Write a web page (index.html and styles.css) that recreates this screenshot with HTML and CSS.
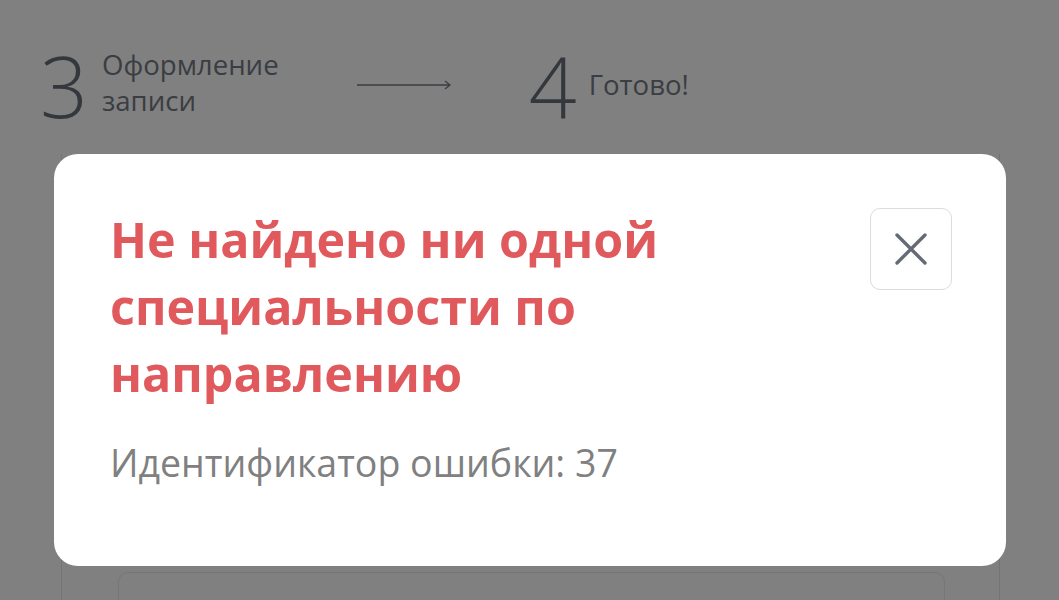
FILE: index.html
```html
<!DOCTYPE html>
<html lang="ru">
<head>
<meta charset="utf-8">
<link rel="stylesheet" href="styles.css">
</head>
<body>
<div class="page">
  <div class="stepper">
    <div class="step">
      <span class="num">3</span>
      <span class="label">Оформление<br>записи</span>
    </div>
    <div class="arrow">
      <svg width="96" height="12" viewBox="0 0 96 12"><path d="M0 6H93M88 2L93 6L88 10" fill="none" stroke="#3a3d42" stroke-width="1.3"/></svg>
    </div>
    <div class="step step4">
      <span class="num">4</span>
      <span class="label single">Готово!</span>
    </div>
  </div>
  <div class="card">
    <div class="inner"></div>
  </div>
</div>
<div class="modal">
  <div class="modal-body">
    <h1 class="title">Не найдено ни одной специальности по направлению</h1>
    <p class="sub">Идентификатор ошибки: 37</p>
  </div>
  <button class="close" aria-label="Закрыть">
    <svg width="34" height="34" viewBox="0 0 34 34"><path d="M3 3L31 31M31 3L3 31" stroke="#656b76" stroke-width="3.4" stroke-linecap="round"/></svg>
  </button>
</div>
</body>
</html>
```
FILE: styles.css
```css
html, body {
  margin: 0;
  padding: 0;
  background: #808080;
  font-family: "Open Sans", "Noto Sans", sans-serif;
  overflow: hidden;
}
.page {
  width: 1059px;
  height: 600px;
  position: relative;
  overflow: hidden;
}
.stepper {
  display: flex;
  align-items: flex-start;
  padding: 36px 0 0 40px;
  height: 118px;
  box-sizing: border-box;
}
.step {
  display: flex;
  align-items: flex-start;
}
.num {
  font-size: 84px;
  font-weight: 300;
  line-height: 1;
  color: #34383d;
  margin-top: 8px;
}
.label {
  font-size: 27.6px;
  line-height: 36px;
  color: #3a3d42;
  margin-left: 14px;
  margin-top: 10px;
}
.label.single {
  margin-top: 30px;
  margin-left: 12px;
}
.arrow {
  margin: 38px 0 0 78px;
}
.step4 {
  margin-left: 76px;
}
.card {
  margin: 36px 59px 0 61px;
  height: 446px;
  border-left: 1.5px solid #747474;
  border-right: 1.5px solid #747474;
  padding: 418px 54px 0 56px;
  box-sizing: border-box;
}
.inner {
  height: 60px;
  border: 1.5px solid #767676;
  border-radius: 10px;
}
.modal {
  position: absolute;
  left: 54px;
  top: 154px;
  width: 952px;
  height: 412px;
  background: #fff;
  border-radius: 24px;
  box-sizing: border-box;
  display: flex;
  justify-content: space-between;
  padding: 52px 54px 0 56px;
}
.modal-body {
  width: 680px;
}
.title {
  margin: 0;
  font-size: 48.4px;
  font-weight: 700;
  line-height: 67px;
  color: #e05a5d;
  letter-spacing: 0;
}
.sub {
  margin: 31px 0 0;
  font-size: 37.5px;
  line-height: 50px;
  color: #808080;
}
.close {
  width: 82px;
  height: 82px;
  margin-top: 2px;
  border: 1.5px solid #dcdcdc;
  border-radius: 10px;
  background: #fff;
  display: flex;
  align-items: center;
  justify-content: center;
  padding: 0;
}
```
